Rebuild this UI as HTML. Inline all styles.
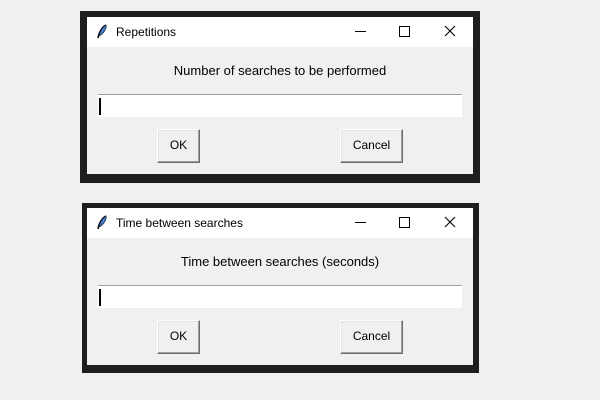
<!DOCTYPE html>
<html><head><style>
body{margin:0;width:600px;height:400px;background:#f0f0f0;position:relative;overflow:hidden;font-family:"Liberation Sans",sans-serif;}
.win{position:absolute;background:#1e1e1e;}
.in{position:absolute;left:7px;right:7px;background:#f0f0f0;}
.tb{position:absolute;left:0;right:0;top:0;height:30px;background:#fff;}
.ttl{position:absolute;left:29px;top:8px;font-size:12px;color:#000;}
.lbl{position:absolute;left:0;right:0;text-align:center;font-size:13px;color:#000;}
.ent{position:absolute;left:11px;width:364px;height:23px;background:#fff;border-top:1px solid #a0a0a0;box-sizing:border-box;}
.cur{position:absolute;left:1px;top:3px;width:2px;height:17px;background:#000;}
.btn{position:absolute;height:34px;box-sizing:border-box;background:#f0f0f0;border:1px solid;border-color:#fff #6d6d6d #6d6d6d #fff;box-shadow:inset -1px -1px 0 #a0a0a0,inset 1px 1px 0 #e3e3e3;font-size:12px;text-align:center;line-height:31px;color:#000;}
</style></head><body>

<div class="win" style="left:80px;top:11px;width:400px;height:172px;">
 <div class="in" style="top:6px;bottom:9px;">
  <div class="tb">
   <svg style="position:absolute;left:9px;top:7px" width="12" height="16" viewBox="0 0 12 16"><path d="M10 1C6 3 3 8 2 14" stroke="#000" stroke-width="1.5" fill="none"/><path d="M10 1C11 5 7 10 3 12C4 7 7 3 10 1Z" fill="#4a7fd0" stroke="#123" stroke-width="0.7"/></svg>
   <div class="ttl">Repetitions</div>
   <div style="position:absolute;left:268px;top:14px;width:11px;height:1px;background:#000"></div>
   <div style="position:absolute;left:312px;top:9px;width:9px;height:9px;border:1px solid #000"></div>
   <svg style="position:absolute;left:357px;top:8px" width="12" height="12"><path d="M1 1L11 11M11 1L1 11" stroke="#000" stroke-width="1.1"/></svg>
  </div>
  <div class="lbl" style="top:46px;">Number of searches to be performed</div>
  <div class="ent" style="top:77px;"><div class="cur"></div></div>
  <div class="btn" style="left:70px;top:112px;width:43px;">OK</div>
  <div class="btn" style="left:253px;top:112px;width:63px;">Cancel</div>
 </div>
</div>

<div class="win" style="left:82px;top:203px;width:397px;height:170px;">
 <div class="in" style="left:5px;right:6px;top:5px;bottom:8px;">
  <div class="tb">
   <svg style="position:absolute;left:9px;top:7px" width="12" height="16" viewBox="0 0 12 16"><path d="M10 1C6 3 3 8 2 14" stroke="#000" stroke-width="1.5" fill="none"/><path d="M10 1C11 5 7 10 3 12C4 7 7 3 10 1Z" fill="#4a7fd0" stroke="#123" stroke-width="0.7"/></svg>
   <div class="ttl">Time between searches</div>
   <div style="position:absolute;left:268px;top:14px;width:11px;height:1px;background:#000"></div>
   <div style="position:absolute;left:312px;top:9px;width:9px;height:9px;border:1px solid #000"></div>
   <svg style="position:absolute;left:357px;top:8px" width="12" height="12"><path d="M1 1L11 11M11 1L1 11" stroke="#000" stroke-width="1.1"/></svg>
  </div>
  <div class="lbl" style="top:46px;">Time between searches (seconds)</div>
  <div class="ent" style="top:77px;"><div class="cur"></div></div>
  <div class="btn" style="left:70px;top:112px;width:43px;">OK</div>
  <div class="btn" style="left:253px;top:112px;width:63px;">Cancel</div>
 </div>
</div>

</body></html>
